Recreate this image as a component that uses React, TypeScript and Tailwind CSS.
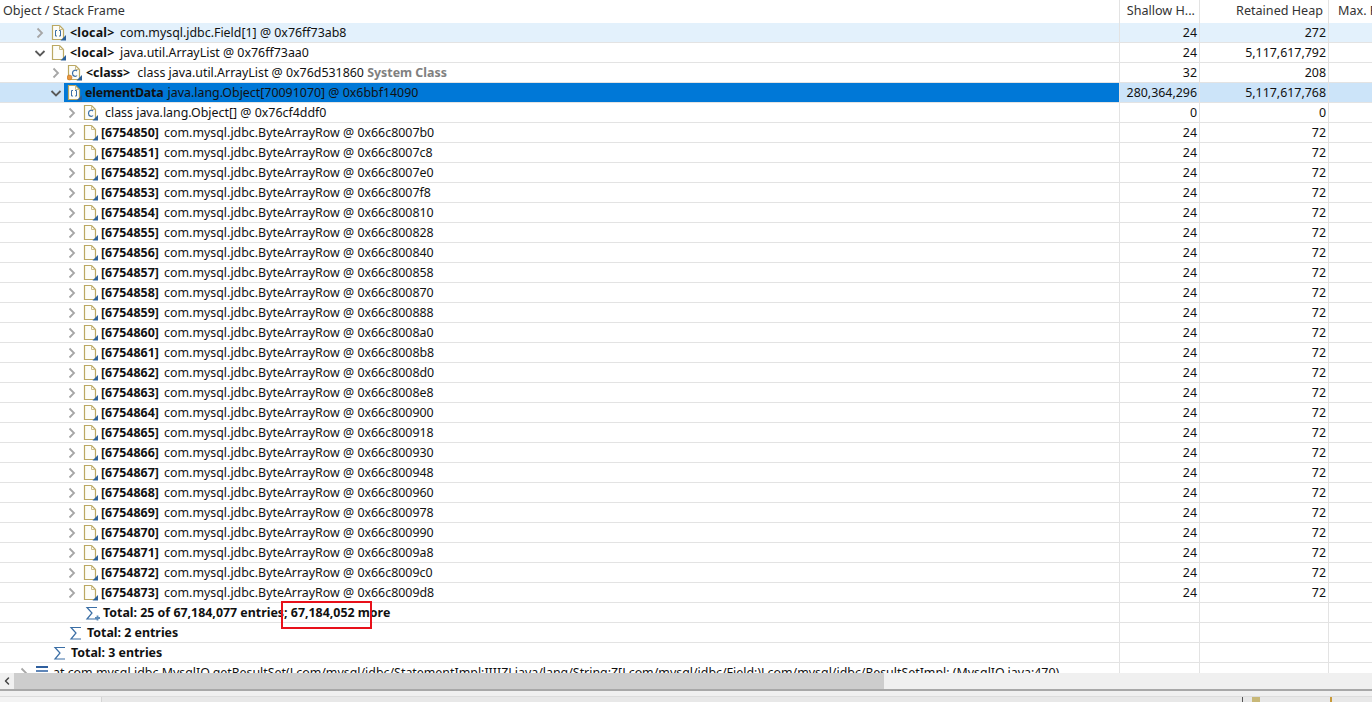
import { ChevronLeft } from "lucide-react";

type IconKind = "array" | "file" | "class" | "classStatic" | "sigma" | "sigmaPlus" | "frame";

type Row = {
  depth: number;
  arrow?: "right" | "down";
  icon: IconKind;
  bold?: string;
  boldClass?: string;
  text?: string;
  muted?: string;
  shallow?: string;
  retained?: string;
  hover?: boolean;
  selected?: boolean;
  gap?: boolean;
};

const elementRows = [
  ["6754850", "0x66c8007b0"],
  ["6754851", "0x66c8007c8"],
  ["6754852", "0x66c8007e0"],
  ["6754853", "0x66c8007f8"],
  ["6754854", "0x66c800810"],
  ["6754855", "0x66c800828"],
  ["6754856", "0x66c800840"],
  ["6754857", "0x66c800858"],
  ["6754858", "0x66c800870"],
  ["6754859", "0x66c800888"],
  ["6754860", "0x66c8008a0"],
  ["6754861", "0x66c8008b8"],
  ["6754862", "0x66c8008d0"],
  ["6754863", "0x66c8008e8"],
  ["6754864", "0x66c800900"],
  ["6754865", "0x66c800918"],
  ["6754866", "0x66c800930"],
  ["6754867", "0x66c800948"],
  ["6754868", "0x66c800960"],
  ["6754869", "0x66c800978"],
  ["6754870", "0x66c800990"],
  ["6754871", "0x66c8009a8"],
  ["6754872", "0x66c8009c0"],
  ["6754873", "0x66c8009d8"],
];

const rows: Row[] = [
  { depth: 2, arrow: "right", icon: "array", bold: "<local>", boldClass: "ml-px mr-[2px] tracking-[0.2px]", text: "com.mysql.jdbc.Field[1] @ 0x76ff73ab8", shallow: "24", retained: "272", hover: true },
  { depth: 2, arrow: "down", icon: "file", bold: "<local>", boldClass: "ml-px mr-[2px] tracking-[0.2px]", text: "java.util.ArrayList @ 0x76ff73aa0", shallow: "24", retained: "5,117,617,792" },
  { depth: 3, arrow: "right", icon: "classStatic", bold: "<class>", boldClass: "ml-px mr-[4px]", text: "class java.util.ArrayList @ 0x76d531860", muted: "System Class", shallow: "32", retained: "208" },
  { depth: 3, arrow: "down", icon: "array", bold: "elementData", boldClass: "mr-px tracking-[-0.2px]", text: "java.lang.Object[70091070] @ 0x6bbf14090", shallow: "280,364,296", retained: "5,117,617,768", selected: true },
  { depth: 4, arrow: "right", icon: "class", text: "class java.lang.Object[] @ 0x76cf4ddf0", shallow: "0", retained: "0", gap: true },
  ...elementRows.map(([index, address]): Row => ({
    depth: 4,
    arrow: "right",
    icon: "file",
    bold: `[${index}]`,
    boldClass: "mr-[2px]",
    text: `com.mysql.jdbc.ByteArrayRow @ ${address}`,
    shallow: "24",
    retained: "72",
  })),
  { depth: 4, icon: "sigmaPlus", bold: "Total: 25 of 67,184,077 entries; 67,184,052 more" },
  { depth: 3, icon: "sigma", bold: "Total: 2 entries" },
  { depth: 2, icon: "sigma", bold: "Total: 3 entries" },
  {
    depth: 1,
    arrow: "right",
    icon: "frame",
    text: "at com.mysql.jdbc.MysqlIO.getResultSet(Lcom/mysql/jdbc/StatementImpl;IIIIZLjava/lang/String;Z[Lcom/mysql/jdbc/Field;)Lcom/mysql/jdbc/ResultSetImpl; (MysqlIO.java:470)",
  },
];

function Arrow({ dir }: { dir?: "right" | "down" }) {
  if (!dir) return <span className="w-4 shrink-0" />;
  return (
    <svg viewBox="0 0 16 16" className="w-4 h-4 shrink-0" fill="none" strokeWidth="1.8">
      {dir === "right" ? (
        <path d="M5.5 3.5 L10 8 L5.5 12.5" stroke="#a6a6a6" />
      ) : (
        <path d="M3.5 6 L8 10.5 L12.5 6" stroke="#595959" />
      )}
    </svg>
  );
}

function ObjectIcon({ kind }: { kind: IconKind }) {
  if (kind === "sigma" || kind === "sigmaPlus") {
    return (
      <svg viewBox="0 0 16 16" className="w-4 h-4 shrink-0 ml-[5px]" fill="none">
        <path d="M12 2.5 H2 L7 8 L2 14 H12" stroke="#3a6ea5" strokeWidth="1.2" />
        {kind === "sigmaPlus" && <path d="M12.5 10.5 V15.5 M10 13 H15" stroke="#5b8ab8" strokeWidth="1.8" />}
      </svg>
    );
  }
  if (kind === "frame") {
    return (
      <svg viewBox="0 0 16 16" className="w-4 h-4 shrink-0 ml-[3px]">
        <rect x="1" y="1" width="12" height="2" fill="#2f5f9e" />
        <rect x="1" y="5" width="12" height="2" fill="#5f86b8" />
        <rect x="1" y="9" width="12" height="2" fill="#2f5f9e" />
      </svg>
    );
  }
  return (
    <svg viewBox="0 0 16 16" className="w-4 h-4 shrink-0 ml-[3px]" fill="none">
      <path d="M1.5 0.5 H8.5 L12.5 4.5 V14.5 H1.5 Z" fill="#fdfdf8" stroke="#bba862" strokeWidth="1.2" />
      <path d="M8.5 0.5 V4.5 H12.5" stroke="#cdbd8a" />
      {kind === "array" && <path d="M6 5.5 H4.5 V11 H6 M8 5.5 H9.5 V11 H8" stroke="#3a6ea5" />}
      {(kind === "class" || kind === "classStatic") && (
        <path d="M10 6 C9 4.8 5.5 4.8 5.5 8.3 C5.5 11.8 9 11.8 10 10.5" stroke="#3a6ea5" strokeWidth="1.2" />
      )}
      <path d="M15 10 V15.5 H9.5 Z" fill="#2a6099" />
      {kind === "classStatic" && <circle cx="2.5" cy="12.5" r="2.5" fill="#e8963c" stroke="#b86f1f" strokeWidth="0.5" />}
    </svg>
  );
}

function TreeRow({ row }: { row: Row }) {
  return (
    <div className={`flex h-5 border-b border-[#e3e3e3] ${row.hover ? "bg-[#e3f1fc]" : ""} ${row.selected ? "bg-[#cce4f9]" : ""}`}>
      <div className="w-[1120px] shrink-0 flex items-center border-r border-[#e3e3e3] overflow-hidden">
        <span className="shrink-0" style={{ width: row.depth * 16 }} />
        <Arrow dir={row.arrow} />
        <div className={`flex-1 min-w-0 h-full flex items-center gap-[2px] ${row.selected ? "bg-[#0078d7]" : ""}`}>
          <ObjectIcon kind={row.icon} />
          <span className={`whitespace-nowrap self-start leading-[19px] ${row.gap ? "ml-[4px]" : ""}`}>
            {row.bold && <b className={`font-bold ${row.boldClass ?? ""}`}>{row.bold} </b>}
            {row.text}
            {row.muted && <b className="font-bold text-[#808080]"> {row.muted}</b>}
          </span>
        </div>
      </div>
      <div className="w-20 shrink-0 border-r border-[#e3e3e3] text-right pr-[2px] leading-[19px]">{row.shallow}</div>
      <div className="w-[129px] shrink-0 border-r border-[#e3e3e3] text-right pr-[2px] leading-[19px]">{row.retained}</div>
      <div className="flex-1" />
    </div>
  );
}

export default function App() {
  return (
    <div className="h-screen w-[1372px] flex flex-col overflow-hidden bg-white text-[12.4px] text-[#111] relative font-['Noto_Sans','Open_Sans',sans-serif]">
      <div className="h-[23px] shrink-0 flex items-center text-[#333] text-[12.6px] leading-none">
        <div className="w-[1120px] shrink-0 h-full flex items-center pl-[3px] border-r border-[#e3e3e3]">Object / Stack Frame</div>
        <div className="w-20 shrink-0 h-full flex items-center justify-end pr-1 border-r border-[#e3e3e3]">Shallow H...</div>
        <div className="w-[129px] shrink-0 h-full flex items-center justify-end pr-[5px] border-r border-[#e3e3e3]">Retained Heap</div>
        <div className="flex-1 h-full flex items-center pl-[9px] overflow-hidden whitespace-nowrap">Max. Retained</div>
      </div>

      <div className="flex-1 min-h-0 overflow-hidden">
        {rows.map((row, i) => (
          <TreeRow key={i} row={row} />
        ))}
      </div>

      <div className="h-4 shrink-0 flex items-center bg-[#f0f0f0]">
        <div className="w-[14px] flex items-center justify-center">
          <ChevronLeft className="w-3 h-3 text-[#444]" strokeWidth={3} />
        </div>
        <div className="w-[870px] h-full bg-[#cdcdcd]" />
      </div>
      <div className="h-[13px] shrink-0 border-t-2 border-[#a8a8a8] bg-[#f0f0f0]">
        <div className="mt-[5px] h-full border-t border-[#dcdcdc] flex">
          <div className="w-[101px] bg-[#f3f3f3]" />
          <div className="flex-1 bg-[#e8e8e8] border-l border-[#d4d4d4] flex">
            <div className="ml-[1140px] w-px bg-[#555]" />
            <div className="ml-[9px] w-2 bg-[#c8b878]" />
            <div className="ml-[70px] w-[2px] bg-[#c89a3a]" />
          </div>
        </div>
      </div>

      <div className="absolute left-[281px] top-[601px] w-[91px] h-[28px] border-2 border-[#e8101a]" />
    </div>
  );
}
